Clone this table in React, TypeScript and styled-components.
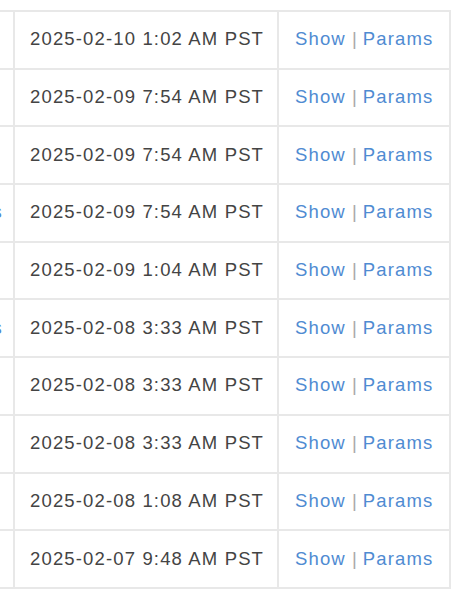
import React from "react";
import styled, { createGlobalStyle } from "styled-components";

const Global = createGlobalStyle`
  html, body {
    margin: 0;
    padding: 0;
    background: #ffffff;
    overflow: hidden;
  }
`;

const Page = styled.div`
  padding-top: 10px;
  width: 464px;
  height: 606px;
  box-sizing: border-box;
  overflow: hidden;
  font-family: "Liberation Sans", Arial, sans-serif;
`;

const Table = styled.div`
  margin-left: -86px;
  width: 537px;
  border-top: 2px solid #e8e8e8;
  display: flex;
  flex-direction: column;
`;

const Row = styled.div`
  display: grid;
  grid-template-columns: 101px 264px 172px;
  height: 57.7px;
  box-sizing: border-box;
  border-bottom: 2px solid #e8e8e8;
`;

const Cell = styled.div<{ $align?: "left" | "right" }>`
  display: flex;
  align-items: center;
  justify-content: ${(p) => (p.$align === "right" ? "flex-end" : "flex-start")};
  box-sizing: border-box;
  border-right: 2px solid #e8e8e8;
  white-space: nowrap;
  overflow: hidden;
  font-size: 18.5px;
  letter-spacing: 1.15px;
  padding-bottom: 1px;
`;

const ActionCell = styled(Cell)`
  padding-right: 10px;
`;

const DateCell = styled(Cell)`
  padding-left: 15px;
  color: #444444;
`;

const LinkCell = styled(Cell)`
  padding-left: 16px;
`;

const Link = styled.a`
  color: #4f8bd2;
  text-decoration: none;
`;

const Sep = styled.span`
  color: #a8a8a8;
  margin: 0 5px 0 6px;
`;

const rows: { date: string; action?: string }[] = [
  { date: "2025-02-10 1:02 AM PST" },
  { date: "2025-02-09 7:54 AM PST" },
  { date: "2025-02-09 7:54 AM PST" },
  { date: "2025-02-09 7:54 AM PST", action: "Logs" },
  { date: "2025-02-09 1:04 AM PST" },
  { date: "2025-02-08 3:33 AM PST", action: "Logs" },
  { date: "2025-02-08 3:33 AM PST" },
  { date: "2025-02-08 3:33 AM PST" },
  { date: "2025-02-08 1:08 AM PST" },
  { date: "2025-02-07 9:48 AM PST" },
];

export default function App() {
  return (
    <>
      <Global />
      <Page>
        <Table>
          {rows.map((r, i) => (
            <Row key={i}>
              <ActionCell $align="right">
                {r.action && <Link href="#">{r.action}</Link>}
              </ActionCell>
              <DateCell>{r.date}</DateCell>
              <LinkCell>
                <Link href="#">Show</Link>
                <Sep>|</Sep>
                <Link href="#">Params</Link>
              </LinkCell>
            </Row>
          ))}
        </Table>
      </Page>
    </>
  );
}
